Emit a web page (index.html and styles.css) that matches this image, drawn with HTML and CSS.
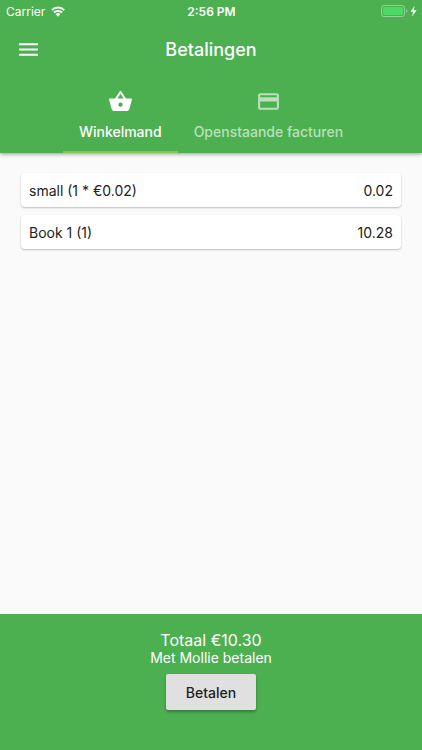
FILE: index.html
```html
<!DOCTYPE html>
<html lang="nl">
<head>
<meta charset="utf-8">
<meta name="viewport" content="width=device-width, initial-scale=1">
<title>Betalingen</title>
<link rel="stylesheet" href="styles.css">
</head>
<body>
<header class="header">
  <div class="status">
    <div class="carrier">
      <span>Carrier</span>
      <svg class="wifi" viewBox="0 0 14 11" aria-hidden="true"><path d="M.8 4.1a9 9 0 0 1 12.4 0M2.9 6.5a6 6 0 0 1 8.2 0" fill="none" stroke="currentColor" stroke-width="2"/><path d="M4.6 8.3a3.4 3.4 0 0 1 4.8 0L7 10.8z" fill="currentColor"/></svg>
    </div>
    <span class="clock">2:56 PM</span>
    <svg class="battery" viewBox="0 0 36 12" aria-hidden="true"><rect x=".5" y=".5" width="23" height="11" rx="2.5" fill="none" stroke="#94d097"/><rect x="2" y="2" width="20" height="8" rx="1.3" fill="#4bdb64"/><path d="M25 4.2q1.6.5 1.6 1.8T25 7.8z" fill="#94d097"/><path d="M33.6.8 29.6 6.8h2.5L31 11.4l4.6-6.2h-2.9z" fill="#fff"/></svg>
  </div>
  <div class="appbar">
    <button class="menu" type="button" aria-label="Menu">
      <svg viewBox="0 0 24 24" aria-hidden="true"><path d="M3 18h18v-2H3v2zm0-5h18v-2H3v2zm0-7v2h18V6H3z"/></svg>
    </button>
    <h1 class="title">Betalingen</h1>
  </div>
  <nav class="tabs">
    <a class="tab tab-active" href="#winkelmand" aria-current="page">
      <svg viewBox="0 0 24 24" aria-hidden="true"><path d="M17.21 9l-4.38-6.56c-.19-.28-.51-.42-.83-.42-.32 0-.64.14-.83.43L6.79 9H2c-.55 0-1 .45-1 1 0 .09.01.18.04.27l2.54 9.27c.23.84 1 1.46 1.92 1.46h13c.92 0 1.69-.62 1.93-1.46l2.54-9.27L23 10c0-.55-.45-1-1-1h-4.79zM9 9l3-4.4L15 9H9zm3 8c-1.1 0-2-.9-2-2s.9-2 2-2 2 .9 2 2-.9 2-2 2z"/></svg>
      <span>Winkelmand</span>
    </a>
    <a class="tab" href="#facturen">
      <svg viewBox="0 0 24 24" aria-hidden="true"><path d="M20 4H4c-1.11 0-1.99.89-1.99 2L2 18c0 1.11.89 2 2 2h16c1.11 0 2-.89 2-2V6c0-1.11-.89-2-2-2zm0 14H4v-6h16v6zm0-10H4V6h16v2z"/></svg>
      <span>Openstaande facturen</span>
    </a>
  </nav>
</header>
<main class="content" id="winkelmand">
  <ul class="items">
    <li class="item"><span>small (1 * €0.02)</span><span>0.02</span></li>
    <li class="item"><span>Book 1 (1)</span><span>10.28</span></li>
  </ul>
</main>
<footer class="footer">
  <p class="total">Totaal €10.30</p>
  <p class="method">Met Mollie betalen</p>
  <button class="pay" type="button">Betalen</button>
</footer>
</body>
</html>
```
FILE: styles.css
```css
* {
  box-sizing: border-box;
}

body {
  margin: 0;
  min-height: 100vh;
  display: flex;
  flex-direction: column;
  background: #fafafa;
  color: #222;
  font-family: Inter, "Liberation Sans", sans-serif;
  font-size: 14px;
}

svg {
  display: block;
  fill: currentColor;
}

.header {
  background: #4caf50;
  color: #fff;
  box-shadow: 0 1px 4px rgba(0, 0, 0, 0.4);
}

.status {
  display: grid;
  grid-template-columns: 1fr auto 1fr;
  align-items: center;
  height: 22px;
  padding: 0 5px 0 6px;
  font-size: 12px;
}

.carrier {
  display: flex;
  align-items: center;
  gap: 6px;
}

.wifi {
  width: 14px;
  height: 11px;
}

.clock {
  font-weight: 600;
}

.battery {
  width: 36px;
  height: 12px;
  justify-self: end;
}

.appbar {
  display: grid;
  grid-template-columns: 56px 1fr 56px;
  align-items: center;
  height: 55px;
}

.menu {
  justify-self: center;
  padding: 0;
  border: 0;
  background: none;
  color: inherit;
}

.menu svg,
.tab svg {
  width: 25px;
  height: 25px;
}

.title {
  margin: 0;
  font-size: 18px;
  font-weight: 500;
  text-align: center;
}

.tabs {
  display: flex;
  justify-content: center;
}

.tab {
  display: flex;
  flex-direction: column;
  align-items: center;
  gap: 8px;
  height: 76px;
  padding: 12px 16px 0;
  border-bottom: 2px solid transparent;
  color: #b9e0bb;
  font-weight: 500;
  line-height: 20px;
  text-decoration: none;
}

.tab-active {
  border-color: #8bc34a;
  color: #fff;
}

.content {
  flex: 1;
  padding: 20px 21px;
}

.items {
  display: grid;
  gap: 8px;
  margin: 0;
  padding: 0;
  list-style: none;
}

.item {
  display: flex;
  justify-content: space-between;
  align-items: center;
  height: 34px;
  padding: 0 8px;
  border-radius: 4px;
  background: #fff;
  box-shadow: 0 1px 2px rgba(0, 0, 0, 0.25);
}

.footer {
  display: flex;
  flex-direction: column;
  align-items: center;
  min-height: 136px;
  padding: 16px;
  background: #4caf50;
  color: #fff;
}

.total {
  margin: 0;
  font-size: 16px;
  line-height: 20px;
}

.method {
  margin: 0;
  line-height: 16px;
}

.pay {
  height: 36px;
  min-width: 90px;
  margin-top: 8px;
  padding: 0 16px;
  border: 0;
  border-radius: 2px;
  background: #e0e0e0;
  color: #222;
  font: inherit;
  font-weight: 500;
  box-shadow: 0 2px 3px rgba(0, 0, 0, 0.3);
}
```
